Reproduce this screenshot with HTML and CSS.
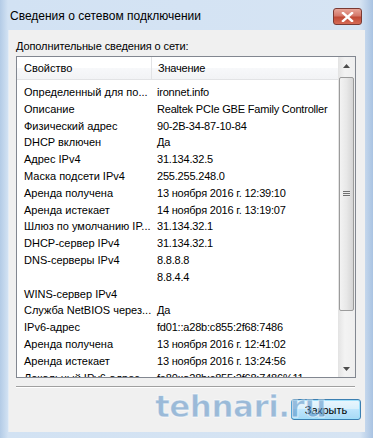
FILE: index.html
```html
<!DOCTYPE html>
<html lang="ru">
<head>
    <meta charset="UTF-8">
    <title>Сведения о сетевом подключении</title>
    <link rel="stylesheet" href="styles.css">
</head>
<body>
    <div class="window">
        <div class="titlebar">
            <span class="title">Сведения о сетевом подключении</span>
            <span class="close-btn">
                <svg width="13" height="10" viewBox="0 0 13 10">
                    <path d="M2 1 L11 9 M11 1 L2 9" stroke="#fff" stroke-width="2.4" stroke-linecap="square"/>
                </svg>
            </span>
        </div>
        <div class="client">
            <div class="label">Дополнительные сведения о сети:</div>
            <div class="listbox">
                <div class="list">
                    <div class="header">
                        <div class="col1">Свойство</div>
                        <div class="col2">Значение</div>
                    </div>
                    <div class="rows">
                        <div class="row"><div class="col1">Определенный для по...</div><div class="col2">ironnet.info</div></div>
                        <div class="row"><div class="col1">Описание</div><div class="col2">Realtek PCIe GBE Family Controller</div></div>
                        <div class="row"><div class="col1">Физический адрес</div><div class="col2">90-2B-34-87-10-84</div></div>
                        <div class="row"><div class="col1">DHCP включен</div><div class="col2">Да</div></div>
                        <div class="row"><div class="col1">Адрес IPv4</div><div class="col2">31.134.32.5</div></div>
                        <div class="row"><div class="col1">Маска подсети IPv4</div><div class="col2">255.255.248.0</div></div>
                        <div class="row"><div class="col1">Аренда получена</div><div class="col2">13 ноября 2016 г. 12:39:10</div></div>
                        <div class="row"><div class="col1">Аренда истекает</div><div class="col2">14 ноября 2016 г. 13:19:07</div></div>
                        <div class="row"><div class="col1">Шлюз по умолчанию IP...</div><div class="col2">31.134.32.1</div></div>
                        <div class="row"><div class="col1">DHCP-сервер IPv4</div><div class="col2">31.134.32.1</div></div>
                        <div class="row"><div class="col1">DNS-серверы IPv4</div><div class="col2">8.8.8.8</div></div>
                        <div class="row"><div class="col1"></div><div class="col2">8.8.4.4</div></div>
                        <div class="row"><div class="col1">WINS-сервер IPv4</div><div class="col2"></div></div>
                        <div class="row"><div class="col1">Служба NetBIOS через...</div><div class="col2">Да</div></div>
                        <div class="row"><div class="col1">IPv6-адрес</div><div class="col2">fd01::a28b:c855:2f68:7486</div></div>
                        <div class="row"><div class="col1">Аренда получена</div><div class="col2">13 ноября 2016 г. 12:41:02</div></div>
                        <div class="row"><div class="col1">Аренда истекает</div><div class="col2">13 ноября 2016 г. 13:24:56</div></div>
                        <div class="row"><div class="col1">Локальный IPv6-адрес</div><div class="col2">fe80::a28b:c855:2f68:7486%11</div></div>
                    </div>
                </div>
                <div class="scrollbar">
                    <div class="arrow">
                        <svg width="7" height="4" viewBox="0 0 7 4"><path d="M0 4 L3.5 0 L7 4 Z" fill="#4d4d4d"/></svg>
                    </div>
                    <div class="track">
                        <div class="thumb">
                            <div class="grip"></div>
                        </div>
                    </div>
                    <div class="arrow">
                        <svg width="7" height="4" viewBox="0 0 7 4"><path d="M0 0 L3.5 4 L7 0 Z" fill="#4d4d4d"/></svg>
                    </div>
                </div>
            </div>
            <div class="separator"></div>
            <div class="footer">
                <button class="btn">Закрыть</button>
                <span class="watermark">tehnari.ru</span>
            </div>
        </div>
    </div>
</body>
</html>
```

FILE: styles.css
```css
body {
    margin: 0;
    background: #c4d8ee;
    font-family: "Liberation Sans", Arial, sans-serif;
    font-size: 11px;
    color: #000;
}
.window {
    width: 373px;
    height: 438px;
    background: linear-gradient(to right, #b3cbe6 0px, #d2e2f3 8px, #d6e4f3 360px, #a9c3e2 373px);
    display: flex;
    flex-direction: column;
    overflow: hidden;
}
.titlebar {
    height: 30px;
    display: flex;
    align-items: flex-start;
    justify-content: space-between;
    padding: 0 11px 0 10px;
}
.title {
    font-size: 12px;
    margin-top: 9px;
    color: #000;
}
.close-btn {
    margin-top: 8px;
    width: 29px;
    height: 17px;
    border: 1px solid #7a3a33;
    border-radius: 3px;
    background: linear-gradient(to bottom, #e8a598 0%, #d4786a 45%, #c04a36 55%, #d66b55 100%);
    display: flex;
    align-items: center;
    justify-content: center;
    box-sizing: border-box;
}
.client {
    margin: 0 8px;
    height: 402px;
    background: #f0f0f0;
    position: relative;
    border-left: 1px solid #e4ecf5;
}
.label {
    padding: 10px 0 0 7px;
    height: 16px;
    letter-spacing: -0.1px;
}
.listbox {
    margin: 0 0 0 7px;
    width: 340px;
    height: 322px;
    border: 1px solid #828790;
    box-sizing: border-box;
    background: #fff;
    display: flex;
}
.list {
    flex: 1;
    overflow: hidden;
}
.header {
    height: 22px;
    display: flex;
    align-items: center;
    background: linear-gradient(to bottom, #ffffff 0%, #ffffff 50%, #f7f8fa 51%, #f2f3f5 100%);
    border-bottom: 1px solid #e2e3e5;
}
.header .col1 {
    border-right: 1px solid #e2e3e5;
    height: 22px;
    line-height: 22px;
}
.col1 {
    width: 127px;
    flex-shrink: 0;
    padding-left: 7px;
    white-space: nowrap;
    overflow: hidden;
}
.col2 {
    padding-left: 6px;
    white-space: nowrap;
    letter-spacing: -0.2px;
}
.rows {
    padding-top: 4px;
}
.row {
    height: 16.8px;
    line-height: 16.8px;
    display: flex;
}
.scrollbar {
    width: 17px;
    flex-shrink: 0;
    display: flex;
    flex-direction: column;
    background: linear-gradient(to right, #e3e3e3, #f3f3f3 40%, #eeeeee);
}
.arrow {
    height: 17px;
    display: flex;
    align-items: center;
    justify-content: center;
}
.track {
    flex: 1;
    padding: 3px 0 1px;
}
.thumb {
    height: 234px;
    margin: 0 0 0 1px;
    width: 15px;
    box-sizing: border-box;
    border: 1px solid #9b9b9b;
    border-radius: 2px;
    background: linear-gradient(to right, #f3f3f3, #e8e8e8 50%, #d5d5d5);
    display: flex;
    align-items: center;
    justify-content: center;
}
.grip {
    width: 7px;
    height: 6px;
    background: repeating-linear-gradient(to bottom, #707070 0, #707070 1px, #ececec 1px, #ececec 2px);
}
.separator {
    margin: 8px 10px 0 7px;
    height: 1px;
    background: #a0a0a0;
    border-bottom: 1px solid #fff;
}
.footer {
    display: flex;
    justify-content: flex-end;
    padding: 11px 4px 0 0;
    position: relative;
}
.btn {
    width: 70px;
    height: 21px;
    font-family: "Liberation Sans", Arial, sans-serif;
    font-size: 11px;
    border: 1px solid #3c7fb1;
    border-radius: 3px;
    background: linear-gradient(to bottom, #eaf6fd 0%, #d9f0fc 45%, #bee6fd 50%, #a7d9f5 100%);
    box-shadow: inset 0 0 0 1px #9fe0fb;
    padding: 0;
    color: #000;
}
.watermark {
    position: absolute;
    left: 146px;
    top: 0;
    z-index: 2;
    font-family: "DejaVu Sans", sans-serif;
    font-size: 31px;
    font-weight: bold;
    letter-spacing: -0.5px;
    color: rgba(80, 140, 195, 0.55);
    -webkit-text-stroke: 1px rgba(255, 255, 255, 0.6);
    pointer-events: none;
}
```
